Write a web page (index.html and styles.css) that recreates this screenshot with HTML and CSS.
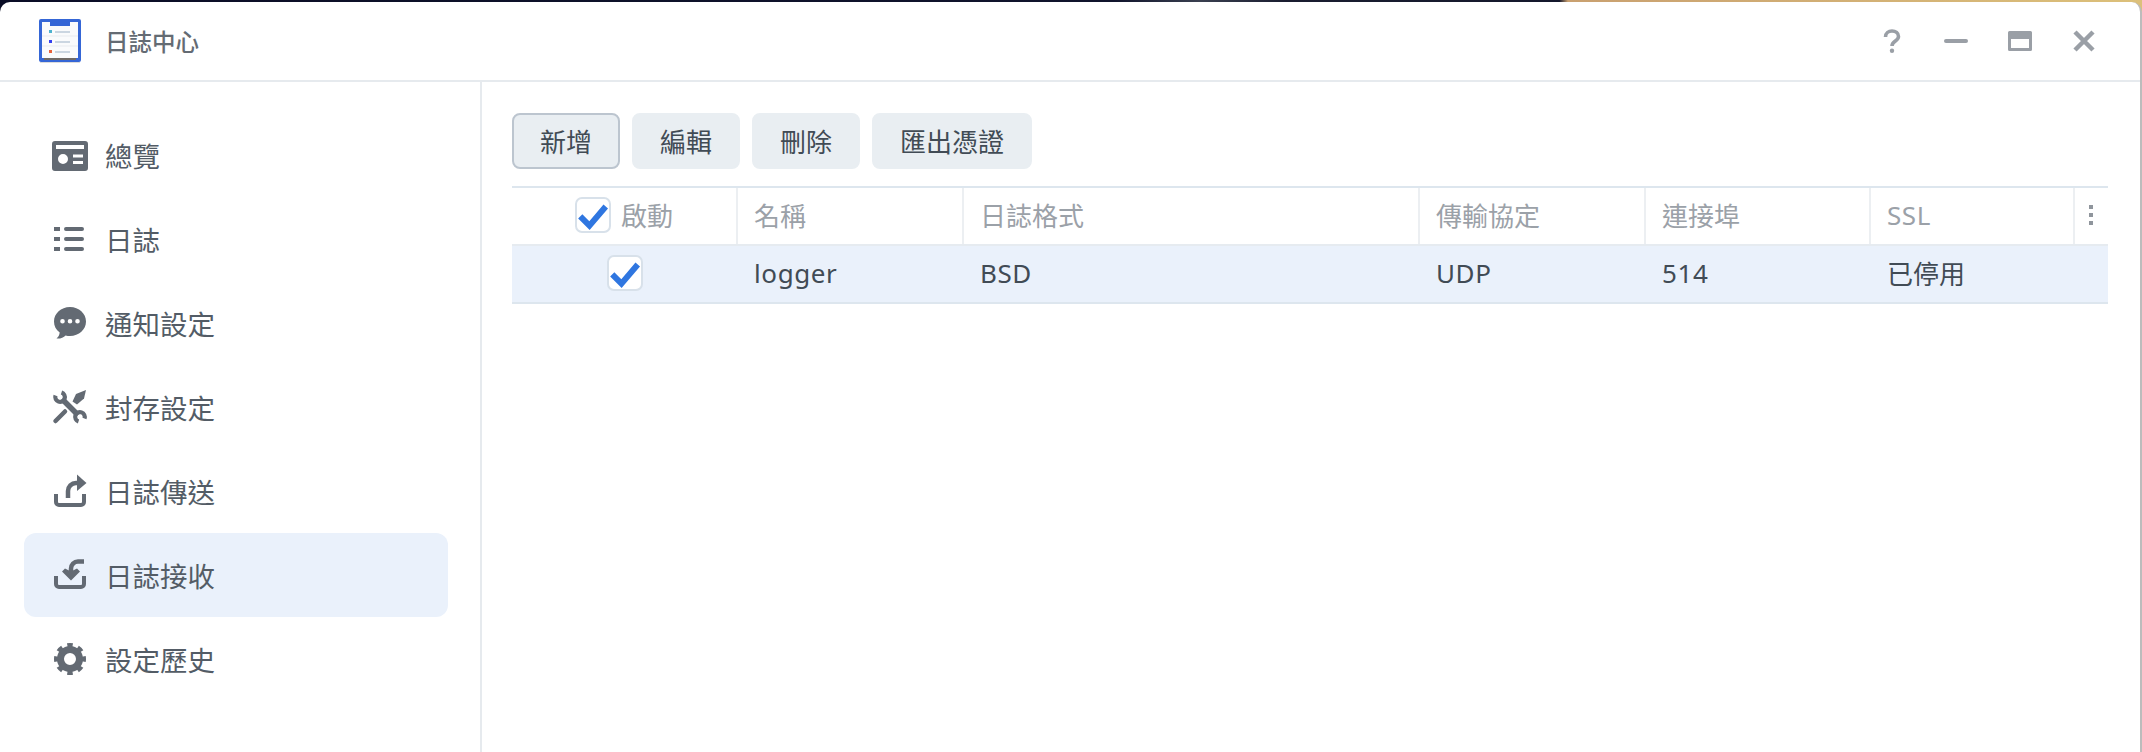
FILE: index.html
```html
<!DOCTYPE html>
<html lang="zh-Hant">
<head>
    <meta charset="UTF-8">
    <title>日誌中心</title>
    <link rel="stylesheet" href="styles.css">
</head>
<body>
    <div class="window">
        <!-- Barra de título -->
        <header class="titlebar">
            <svg class="app-icon" viewBox="0 0 42 44">
                <rect x="0" y="0" width="42" height="43" rx="2" fill="#3566d6"/>
                <rect x="3" y="3" width="36" height="36" fill="#fafbfc"/>
                <rect x="11" y="1" width="20" height="6" fill="#3566d6"/>
                <path d="M3 17h36M3 27h36" stroke="#e8ebef" stroke-width="1"/>
                <rect x="10" y="11" width="3" height="3" fill="#4db3cf"/>
                <rect x="10" y="21" width="3" height="3" fill="#3440f0"/>
                <rect x="10" y="31" width="3" height="3" fill="#e8623a"/>
                <path d="M16 13h15M16 23h15M16 33h15" stroke="#bccad8" stroke-width="1.600"/>
                <rect x="5" y="39" width="32" height="2" fill="#6f6a66"/>
                <rect x="1" y="43" width="40" height="1" fill="#dcdcdc"/>
            </svg>
            <span class="app-title">日誌中心</span>
            <div class="win-buttons">
                <svg viewBox="0 0 24 24"><path d="M5.500 8c0-3.800 3-6 6.500-6s6.500 2.200 6.500 5.500c0 4.500-6.500 4.500-6.500 9.500" fill="none" stroke="#9a9fa6" stroke-width="3.600"/><circle cx="12" cy="21.800" r="2.200" fill="#9a9fa6"/></svg>
                <svg viewBox="0 0 24 24"><path d="M2 12h20" stroke="#9a9fa6" stroke-width="4" stroke-linecap="round"/></svg>
                <svg viewBox="0 0 24 24"><path fill-rule="evenodd" d="M1.500 2h21a1.500 1.500 0 0 1 1.500 1.500v17a1.500 1.500 0 0 1-1.500 1.500h-21A1.500 1.500 0 0 1 0 20.500v-17A1.500 1.500 0 0 1 1.500 2zM3 10v9h18v-9z" fill="#9a9fa6"/></svg>
                <svg viewBox="0 0 24 24"><path d="M3 3l18 18M21 3L3 21" stroke="#9a9fa6" stroke-width="4.500"/></svg>
            </div>
        </header>

        <div class="content">
            <!-- Menu lateral -->
            <nav class="sidebar">
                <a class="nav-item">
                    <svg class="nav-icon" viewBox="0 0 36 36"><path fill-rule="evenodd" d="M3 4h30a3 3 0 0 1 3 3v24a3 3 0 0 1-3 3H3a3 3 0 0 1-3-3V7a3 3 0 0 1 3-3zM4 8v4h28V8zM21 17.500v3h10v-3zM21 24v3h10v-3zM11 17a5 5 0 1 0 0 10a5 5 0 0 0 0-10z" fill="#636a73"/></svg>
                    <span>總覽</span>
                </a>
                <a class="nav-item">
                    <svg class="nav-icon" viewBox="0 0 36 36"><path d="M2 6h6v4H2zM2 16h6v4H2zM2 26h6v4H2z" fill="#636a73"/><path d="M14 8h16M14 18h16M14 28h16" stroke="#636a73" stroke-width="4" stroke-linecap="round"/></svg>
                    <span>日誌</span>
                </a>
                <a class="nav-item">
                    <svg class="nav-icon" viewBox="0 0 36 36"><path fill-rule="evenodd" d="M18 2c9 0 16 6.500 16 14.500S27 31 18 31c-1.500 0-3-.2-4.400-.6C11.500 32.500 8 34 4.500 33.500c1.800-1.500 3-3.500 3.200-6C4 25 2 21 2 16.500 2 8.500 9 2 18 2zM10.500 14a2.300 2.300 0 1 0 0 4.600a2.300 2.300 0 0 0 0-4.600zM18 14a2.300 2.300 0 1 0 0 4.600a2.300 2.300 0 0 0 0-4.600zM25.500 14a2.300 2.300 0 1 0 0 4.600a2.300 2.300 0 0 0 0-4.600z" fill="#636a73"/></svg>
                    <span>通知設定</span>
                </a>
                <a class="nav-item">
                    <svg class="nav-icon" viewBox="0 0 36 36">
                        <path d="M3.500 32L13 22.500" stroke="#636a73" stroke-width="4.500" stroke-linecap="round"/>
                        <path d="M20.500 12.500l3.500-7.500 10-4-2 8.500-7 6z" fill="#636a73"/>
                        <path d="M10 10l16 16" stroke="#636a73" stroke-width="5.500"/>
                        <path d="M3.500 6.500A4.800 4.800 0 1 0 9.500 3.500M32.500 29.500A4.800 4.800 0 1 0 26.500 32.500" fill="none" stroke="#636a73" stroke-width="4.200"/>
                    </svg>
                    <span>封存設定</span>
                </a>
                <a class="nav-item">
                    <svg class="nav-icon" viewBox="0 0 36 36"><path d="M4 21v8a3 3 0 0 0 3 3h22a3 3 0 0 0 3-3v-8" fill="none" stroke="#636a73" stroke-width="4"/><path d="M16 25v-7a8 8 0 0 1 8-8h3" fill="none" stroke="#636a73" stroke-width="4.500"/><path d="M25 1.500L34.500 10 25 18z" fill="#636a73"/></svg>
                    <span>日誌傳送</span>
                </a>
                <a class="nav-item active">
                    <svg class="nav-icon" viewBox="0 0 36 36"><path d="M4 19v8a3 3 0 0 0 3 3h22a3 3 0 0 0 3-3v-8" fill="none" stroke="#636a73" stroke-width="4"/><path d="M32 4.500h-6a7 7 0 0 0-7 7v6" fill="none" stroke="#636a73" stroke-width="4.500"/><path d="M10 14.500l3-3 6 3 6-3 3 3-9 9z" fill="#636a73"/></svg>
                    <span>日誌接收</span>
                </a>
                <a class="nav-item">
                    <svg class="nav-icon" viewBox="0 0 36 36">
                        <circle cx="18" cy="18" r="9.500" fill="none" stroke="#636a73" stroke-width="7"/>
                        <circle cx="18" cy="18" r="14" fill="none" stroke="#636a73" stroke-width="4" pathLength="80" stroke-dasharray="5 5" stroke-dashoffset="2.500"/>
                    </svg>
                    <span>設定歷史</span>
                </a>
            </nav>

            <!-- Área principal -->
            <main class="main">
                <div class="toolbar">
                    <button class="btn btn-focus">新增</button>
                    <button class="btn">編輯</button>
                    <button class="btn">刪除</button>
                    <button class="btn btn-wide">匯出憑證</button>
                </div>

                <div class="grid">
                    <div class="row head">
                        <div class="cell col-check">
                            <span class="check"><svg viewBox="0 0 24 24"><path d="M3 13l6.500 6.500L21 6" fill="none" stroke="#2f76e0" stroke-width="4.200"/></svg></span>
                            <span>啟動</span>
                        </div>
                        <div class="cell col-name">名稱</div>
                        <div class="cell col-format">日誌格式</div>
                        <div class="cell col-proto">傳輸協定</div>
                        <div class="cell col-port">連接埠</div>
                        <div class="cell col-ssl latin">SSL</div>
                        <div class="cell col-more"><span class="dots"><i></i><i></i><i></i></span></div>
                    </div>
                    <div class="row selected">
                        <div class="cell col-check">
                            <span class="check"><svg viewBox="0 0 24 24"><path d="M3 13l6.500 6.500L21 6" fill="none" stroke="#2f76e0" stroke-width="4.200"/></svg></span>
                        </div>
                        <div class="cell col-name latin">logger</div>
                        <div class="cell col-format latin">BSD</div>
                        <div class="cell col-proto latin">UDP</div>
                        <div class="cell col-port latin">514</div>
                        <div class="cell col-ssl">已停用</div>
                        <div class="cell col-more"></div>
                    </div>
                </div>
            </main>
        </div>
    </div>
</body>
</html>
```

FILE: styles.css
```css
* {
    box-sizing: border-box;
}

html, body {
    height: 100%;
}

body {
    margin: 0;
    overflow: hidden;
    padding-top: 2px;
    background: linear-gradient(90deg, #0a0d26 0%, #10142c 52%, #3a4050 56%, #1a1d30 60%, #14182c 72.800%, #c9a070 73.200%, #dcc07a 100%);
    font-family: "Noto Sans", "Noto Sans CJK TC", sans-serif;
}

.window {
    height: 750px;
    background: #fff;
    border-radius: 10px 10px 0 0;
    display: flex;
    flex-direction: column;
    border-right: 2px solid #bcbcbc;
}

/* Barra de título */
.titlebar {
    height: 80px;
    flex: none;
    display: flex;
    align-items: center;
    padding-left: 39px;
    border-bottom: 2px solid #e6eaee;
}

.app-icon {
    width: 42px;
    height: 44px;
}

.app-title {
    margin-left: 24px;
    font-size: 23.500px;
    font-weight: 500;
    color: #646b73;
}

.win-buttons {
    margin-left: auto;
    margin-right: 44px;
    display: flex;
    align-items: center;
    gap: 40px;
}

.win-buttons svg {
    width: 24px;
    height: 24px;
}

.content {
    flex: 1;
    display: flex;
    min-height: 0;
}

/* Menu lateral */
.sidebar {
    width: 482px;
    flex: none;
    padding: 31px 32px 0 24px;
    border-right: 2px solid #e6eaee;
}

.nav-item {
    height: 84px;
    display: flex;
    align-items: center;
    padding-left: 28px;
    border-radius: 12px;
    font-size: 27.500px;
    color: #535c66;
}

.nav-item.active {
    background: #eaf1fb;
}

.nav-icon {
    width: 36px;
    height: 36px;
    flex: none;
    margin-right: 17px;
}

/* Área principal */
.main {
    flex: 1;
    padding: 31px 32px 0 30px;
}

.toolbar {
    display: flex;
    gap: 12px;
}

.btn {
    width: 108px;
    height: 56px;
    padding: 0;
    border: 2px solid #e9eef2;
    border-radius: 8px;
    background: #e9eef2;
    font-family: inherit;
    font-size: 26px;
    color: #414b55;
}

.btn-focus {
    border-color: #bcc5cf;
}

.btn-wide {
    width: 160px;
}

/* Tabela */
.grid {
    margin-top: 17px;
    border-top: 2px solid #dde6ee;
}

.row {
    display: flex;
    height: 58px;
    border-bottom: 2px solid #e6ebf0;
}

.row.selected {
    background: #eaf1fb;
    border-bottom-color: #dde6ee;
}

.cell {
    display: flex;
    align-items: center;
    padding-left: 16px;
    padding-bottom: 2px;
    font-size: 26px;
    color: #414b55;
}

.latin {
    letter-spacing: .6px;
}

.head .cell {
    color: #9ba1a8;
    border-right: 2px solid #eceff2;
}

.head .cell:last-child {
    border-right: 0;
}

.col-check {
    width: 226px;
    padding-left: 0;
    justify-content: center;
    gap: 10px;
}

.col-name { width: 226px; }
.col-format { width: 456px; }
.col-proto { width: 226px; }
.col-port { width: 225px; }
.col-ssl { width: 204px; }
.col-more { flex: 1; padding-left: 14px; }

.check {
    width: 36px;
    height: 36px;
    flex: none;
    background: #fff;
    border: 2px solid #d8e1ea;
    border-radius: 7px;
    display: flex;
    align-items: center;
    justify-content: center;
}

.check svg {
    width: 34px;
    height: 34px;
    flex: none;
}

.dots {
    display: flex;
    flex-direction: column;
    gap: 4px;
}

.dots i {
    width: 4px;
    height: 4px;
    background: #8f959c;
}
```
